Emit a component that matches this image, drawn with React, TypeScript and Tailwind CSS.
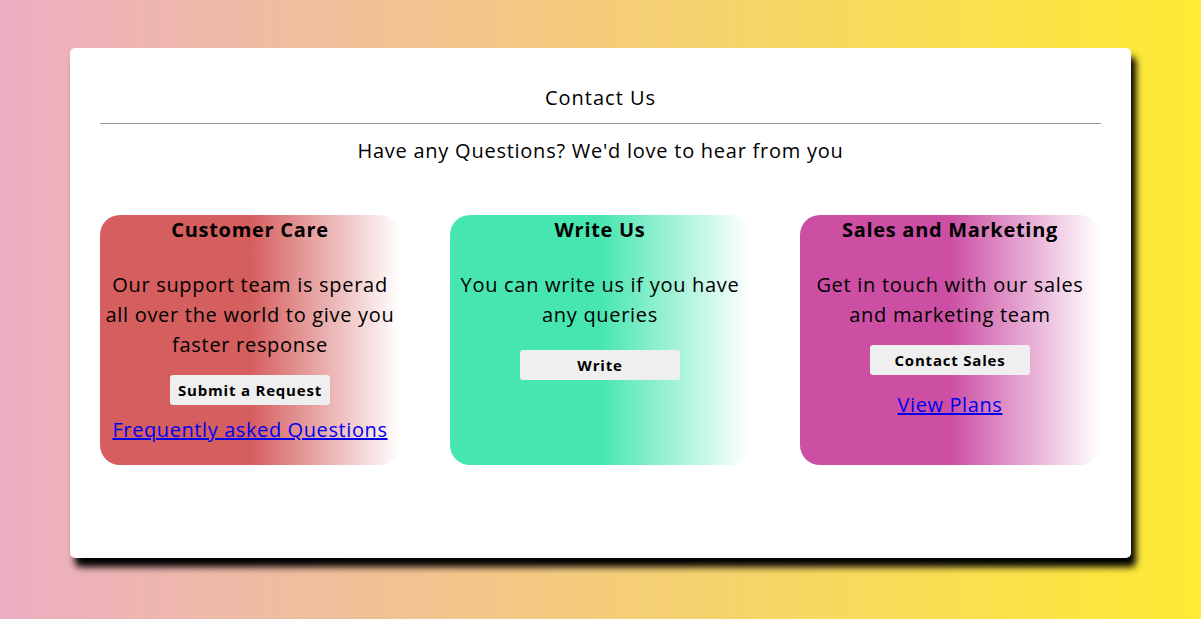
export default function App() {
  const cards = [
    {
      title: 'Customer Care',
      lines: ['Our support team is sperad', 'all over the world to give you', 'faster response'],
      button: 'Submit a Request',
      link: 'Frequently asked Questions',
      bg: 'bg-[linear-gradient(to_right,#d55e5e_50%,#ffffff)]',
      btnGap: 'mt-[15px]',
      linkGap: 'mt-[10px]',
    },
    {
      title: 'Write Us',
      lines: ['You can write us if you have', 'any queries'],
      button: 'Write',
      link: '',
      bg: 'bg-[linear-gradient(to_right,#47e6b1_50%,#ffffff)]',
      btnGap: 'mt-[20px]',
      linkGap: '',
    },
    {
      title: 'Sales and Marketing',
      lines: ['Get in touch with our sales', 'and marketing team'],
      button: 'Contact Sales',
      link: 'View Plans',
      bg: 'bg-[linear-gradient(to_right,#cc4fa4_50%,#ffffff)]',
      btnGap: 'mt-[15px]',
      linkGap: 'mt-[15px]',
    },
  ]

  return (
    <div className="min-h-[619px] w-full bg-[linear-gradient(to_right,#ecaec2,#fdeb33)] pt-[48px] font-['Open_Sans',sans-serif] text-black">
      <div className="mx-[70px] h-[510px] rounded-[5px] bg-white px-[30px] pt-[35px] shadow-[5px_9px_7px_#000]">
        <h1 className="h-[30px] text-center text-[20px] leading-[30px] tracking-[1px]">Contact Us</h1>
        <hr className="mt-[10px] border-t border-[#9a9a9a]" />
        <h2 className="mt-[12px] text-center text-[20px] font-medium leading-[30px] tracking-[0.75px]">
          Have any Questions? We'd love to hear from you
        </h2>
        <div className="mt-[49px] flex gap-[50px]">
          {cards.map((c) => (
            <div key={c.title} className={`flex h-[250px] w-[300px] flex-col items-center rounded-[20px] px-[2px] ${c.bg}`}>
              <h3 className="text-center text-[20px] font-bold leading-[30px] tracking-[0.7px]">{c.title}</h3>
              <p className="mt-[25px] text-center text-[20px] leading-[30px] tracking-[0.7px]">
                {c.lines.map((l) => (
                  <span key={l} className="block whitespace-nowrap">
                    {l}
                  </span>
                ))}
              </p>
              <button className={`${c.btnGap} h-[30px] w-[160px] rounded-[3px] bg-[#efefef] text-[15px] font-bold tracking-[0.8px]`}>
                {c.button}
              </button>
              {c.link && (
                <a href="#" className={`${c.linkGap} text-center text-[20px] leading-[30px] tracking-[0.6px] text-[#0000ee] underline`}>
                  {c.link}
                </a>
              )}
            </div>
          ))}
        </div>
      </div>
    </div>
  )
}
